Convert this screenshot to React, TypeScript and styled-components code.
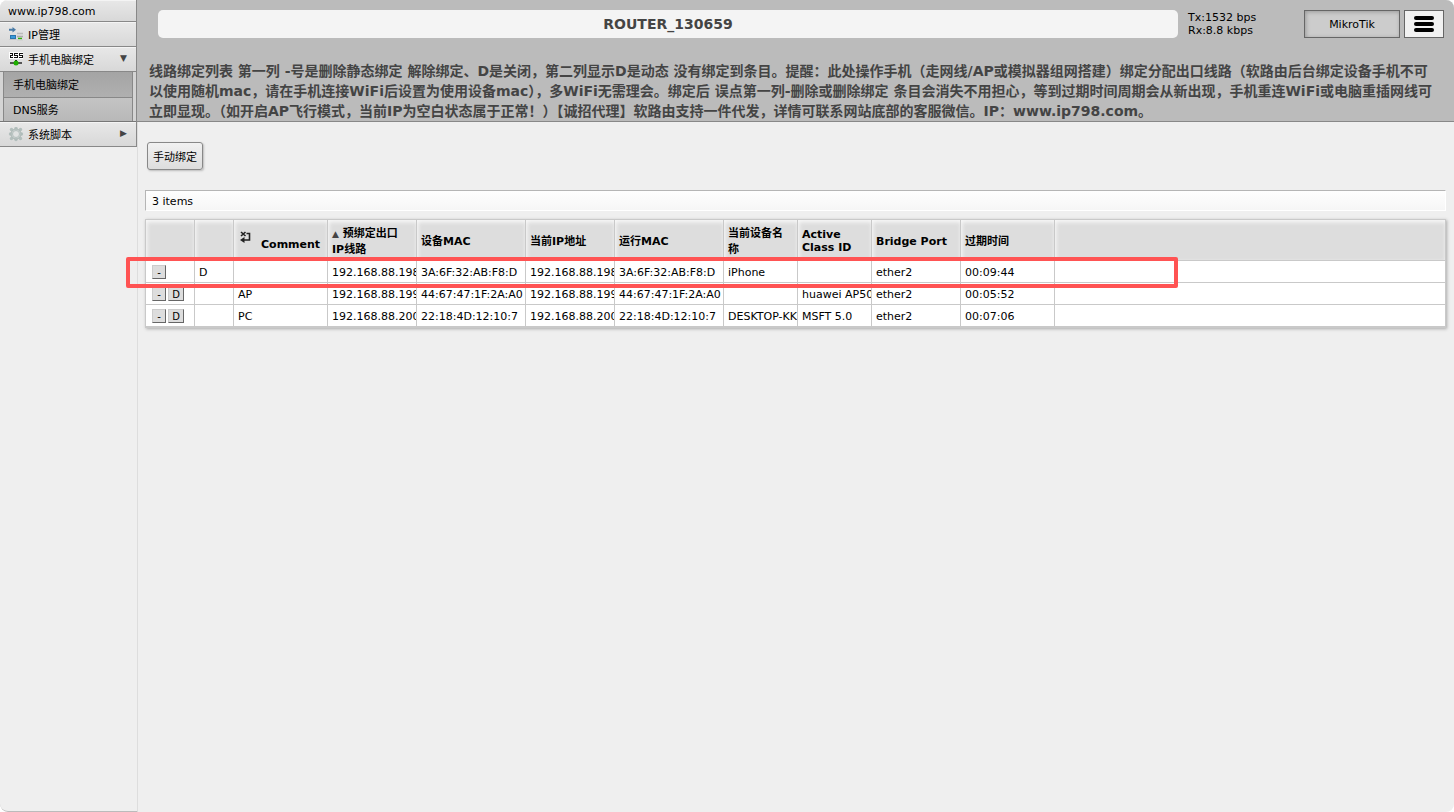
import React from "react";
import styled, { createGlobalStyle } from "styled-components";

const font = `"DejaVu Sans", "Noto Sans CJK SC", sans-serif`;

const GlobalStyle = createGlobalStyle`
  *, *::before, *::after { box-sizing: border-box; }
  html { background: #fff; }
  body { margin: 0; font: 11px/13px ${font}; color: #000; }
  button { font: inherit; color: inherit; cursor: pointer; }
  a { color: inherit; text-decoration: none; }
`;

const Shell = styled.div`
  display: flex;
  min-height: 100vh;
  background: #efefef;
  border-radius: 8px;
  overflow: hidden;
`;

const Sidebar = styled.nav`
  flex: none;
  width: 138px;
  background: #efefef;
  border-right: 1px solid #ddd;
  border-bottom: 1px solid #bbb;
  border-radius: 0 0 0 8px;
`;

const Menu = styled.ul`
  list-style: none;
  margin: 0;
  padding: 0;
`;

const MenuLink = styled.a<{ $brand?: boolean }>`
  display: flex;
  align-items: center;
  gap: 4px;
  height: ${(p) => (p.$brand ? 22 : 25)}px;
  padding: 2px 8px 0;
  border-right: 1px solid #888;
  border-bottom: 1px solid #888;
  background: linear-gradient(#e8e8e8, #d8d8d8);
  box-shadow: inset 0 1px 0 #f4f4f4;

  svg { flex: none; }
`;

const Arrow = styled.span`
  margin: 0 1px 4px auto;
  color: #444;
  font-size: 9px;
  line-height: 9px;
`;

const SubMenu = styled(Menu)`
  padding: 0 3px;
  background: #d4d4d4;
  border-right: 1px solid #888;
  border-bottom: 1px solid #777;
`;

const SubLink = styled.a<{ $active?: boolean }>`
  display: flex;
  align-items: center;
  height: ${(p) => (p.$active ? 26 : 23)}px;
  padding: 2px 0 0 9px;
  border: solid #888;
  border-width: 0 1px ${(p) => (p.$active ? 1 : 0)}px;
  background: ${(p) =>
    p.$active ? "linear-gradient(#a4a4a4, #b0b0b0)" : "linear-gradient(#c4c4c4, #b8b8b8)"};
`;

const Main = styled.div`
  flex: 1;
  min-width: 0;
`;

const Header = styled.header`
  background: #bbb;
  border-bottom: 1px solid #888;
  border-left: 1px solid #888;
  margin-left: -2px;
`;

const TopBar = styled.div`
  display: flex;
  align-items: center;
  padding: 10px 10px 10px 21px;
`;

const Title = styled.h1`
  flex: 1;
  margin: 0;
  border-radius: 5px;
  background: #f4f4f4;
  color: #444;
  text-align: center;
  font-size: 14px;
  line-height: 28px;
`;

const Traffic = styled.div`
  width: 126px;
  padding-left: 10px;
`;

const BrandButton = styled.button`
  width: 96px;
  height: 28px;
  margin-right: 4px;
  padding: 0;
  border: 1px solid #666;
  background: #ccc;
  box-shadow: inset 1px 1px 4px #999;
`;

const MenuButton = styled.button`
  display: grid;
  place-items: center;
  width: 40px;
  height: 28px;
  padding: 0;
  border: 1px solid #666;
  background: #f1f1f1;
`;

const Notice = styled.p`
  margin: 0;
  padding: 13px 12px 0;
  color: #444;
  font-size: 14px;
  font-weight: bold;
  line-height: 20px;
  white-space: nowrap;
`;

const Content = styled.main`
  padding: 20px 8px 0 7px;
`;

const ActionButton = styled.button`
  display: block;
  height: 28px;
  margin: 0 0 20px 2px;
  padding: 2px 5px 0;
  border: 1px solid #888;
  border-radius: 3px;
  background: linear-gradient(#f1f1f1, #ddd);
  box-shadow: 1px 1px 2px #bbb;
`;

const Count = styled.div`
  height: 21px;
  margin-bottom: 8px;
  padding: 0 6px;
  border: 1px solid #fff;
  border-top-color: #b5b5b5;
  border-left-color: #b5b5b5;
  background: linear-gradient(#fefefe, #f6f6f6);
  line-height: 21px;
`;

const TableWrap = styled.div`
  position: relative;
`;

const Table = styled.table`
  width: 100%;
  table-layout: fixed;
  border-collapse: separate;
  border-spacing: 0;
  border: 1px solid #c9c9c9;
  border-width: 1px 1px 2px 0;
  background: #fff;
  box-shadow: 1px 1px 3px #aaa;
`;

const Th = styled.th<{ $tall?: boolean }>`
  height: 41px;
  padding: ${(p) => (p.$tall ? 3 : 2)}px 4px 0;
  border-left: 1px solid #c9c9c9;
  border-bottom: 1px solid #c9c9c9;
  background: #ddd;
  box-shadow: inset 1px 2px 4px #fafafa;
  line-height: ${(p) => (p.$tall ? 16 : 13)}px;
  text-align: left;
  vertical-align: middle;
`;

const CommentHead = styled.span`
  display: flex;
  align-items: center;
  gap: 10px;
  padding: 0 2px;

  span { padding-top: 6px; }
  svg { flex: none; margin-bottom: 8px; }
`;

const SortMark = styled.span`
  color: #444;
  font-size: 9px;
  font-weight: normal;
`;

const Td = styled.td<{ $actions?: boolean }>`
  height: 22px;
  padding: ${(p) => (p.$actions ? 0 : 2)}px 0 0 4px;
  border-left: 1px solid #c9c9c9;
  border-bottom: 1px solid #c9c9c9;
  overflow: hidden;
  white-space: nowrap;

  tr:last-child > & {
    height: 21px;
    border-bottom-width: 0;
  }
`;

const Actions = styled.div`
  display: flex;
  gap: 2px;
  padding-left: 2px;
`;

const MiniButton = styled.button<{ $wide?: boolean }>`
  width: ${(p) => (p.$wide ? 16 : 14)}px;
  height: 14px;
  padding: 0;
  border: 1px solid #ccc;
  border-right-color: #666;
  border-bottom-color: #666;
  background: #ddd;
  font-size: 10px;
  line-height: 13px;
`;

const Highlight = styled.div`
  position: absolute;
  top: 38px;
  left: -19px;
  width: 1052px;
  height: 31px;
  border: 4px solid #ff5353;
  border-radius: 2px;
  pointer-events: none;
`;

const AddressIcon = () => (
  <svg width="16" height="16" viewBox="0 0 16 16" aria-hidden="true">
    <path d="M1 1.800h3.500V0L8 2.800 4.500 5.500V3.800H1z" fill="#4a7ba6" />
    <rect x="2.500" y="8.500" width="5" height="3" fill="#3a9ad9" stroke="#2a75ad" />
    <path d="M9 6.500h6" stroke="#bbb" strokeWidth="1.500" />
    <path d="M9 9.500h6" stroke="#aaa" strokeWidth="1.500" />
    <path d="M1.500 12.500h7" stroke="#c4c4c4" />
    <path d="M10 11.500h4" stroke="#2fae0a" strokeWidth="1.500" />
    <path d="M9 13h6" stroke="#ccc" />
  </svg>
);

const NetworkIcon = () => (
  <svg width="16" height="16" viewBox="0 0 16 16" aria-hidden="true">
    <rect x="1" y="0" width="14" height="7" fill="#fff" />
    <path
      d="M2 1h3v3H3v1h2v1H2V3h2V2H2zM6 1h4v1H7v1h3v3H6V5h3V4H6zM11 1h4v1h-3v1h3v3h-4V5h3V4h-3z"
      fill="#111"
    />
    <path d="M7 8h2v1H7z" fill="#222" />
    <path d="M2 10h12v2H2z" fill="#555" />
    <circle cx="8" cy="11" r="2.500" fill="#1faf00" />
  </svg>
);

const lobes: [number, number][] = [[3.5, 2.5], [8, 1.5], [12.5, 2.5], [13.5, 7], [12.5, 11.5], [8, 12.5], [3.5, 11.5], [2.5, 7]];

const GearIcon = () => (
  <svg width="16" height="16" viewBox="0 0 16 16" aria-hidden="true">
    {lobes.map(([x, y]) => (
      <circle key={`${x}-${y}`} cx={x} cy={y} r="1.700" fill="#b3bfbd" />
    ))}
    <circle cx="8" cy="7" r="5" fill="#c9d1d0" stroke="#aab6b4" />
    <circle cx="8" cy="7" r="3.500" fill="#e0e2e2" stroke="#b5c0be" />
  </svg>
);

const BarsIcon = () => (
  <svg width="20" height="16" viewBox="0 0 20 16" aria-hidden="true">
    <rect y="0" width="20" height="4" rx="2" />
    <rect y="6" width="20" height="4" rx="2" />
    <rect y="12" width="20" height="4" rx="2" />
  </svg>
);

const CommentIcon = () => (
  <svg width="11" height="12" viewBox="0 0 11 12" aria-hidden="true">
    <path d="M1 1l4.500 4M5.500 1L1 5M6.500 2.500h3v6.500H4" fill="none" stroke="#222" strokeWidth="1.600" />
    <path d="M0 9l4.500-3v6z" fill="#222" />
  </svg>
);

const columns: { head: React.ReactNode; width?: number; tall?: boolean }[] = [
  { head: "", width: 49 },
  { head: "", width: 39 },
  {
    head: (
      <CommentHead>
        <CommentIcon />
        <span>Comment</span>
      </CommentHead>
    ),
    width: 94,
  },
  {
    head: (
      <>
        <SortMark>▲</SortMark> 预绑定出口<br />IP线路
      </>
    ),
    width: 89,
    tall: true,
  },
  { head: "设备MAC", width: 109 },
  { head: "当前IP地址", width: 89 },
  { head: "运行MAC", width: 109 },
  { head: "当前设备名称", width: 74, tall: true },
  { head: "Active Class ID", width: 74 },
  { head: "Bridge Port", width: 89 },
  { head: "过期时间", width: 94 },
  { head: "" },
];

const rows = [
  { dynamic: true, cells: ["D", "", "192.168.88.198", "3A:6F:32:AB:F8:D", "192.168.88.198", "3A:6F:32:AB:F8:D", "iPhone", "", "ether2", "00:09:44", ""] },
  { dynamic: false, cells: ["", "AP", "192.168.88.199", "44:67:47:1F:2A:A0", "192.168.88.199", "44:67:47:1F:2A:A0", "", "huawei AP50", "ether2", "00:05:52", ""] },
  { dynamic: false, cells: ["", "PC", "192.168.88.200", "22:18:4D:12:10:7", "192.168.88.200", "22:18:4D:12:10:7", "DESKTOP-KK", "MSFT 5.0", "ether2", "00:07:06", ""] },
];

export default function App() {
  return (
    <>
      <GlobalStyle />
      <Shell>
        <Sidebar>
          <Menu>
            <li><MenuLink $brand href="#home">www.ip798.com</MenuLink></li>
            <li><MenuLink href="#ip"><AddressIcon />IP管理</MenuLink></li>
            <li>
              <MenuLink href="#devices"><NetworkIcon />手机电脑绑定<Arrow>▼</Arrow></MenuLink>
              <SubMenu>
                <li><SubLink $active href="#binding">手机电脑绑定</SubLink></li>
                <li><SubLink href="#dns">DNS服务</SubLink></li>
              </SubMenu>
            </li>
            <li><MenuLink href="#scripts"><GearIcon />系统脚本<Arrow>▶</Arrow></MenuLink></li>
          </Menu>
        </Sidebar>
        <Main>
          <Header>
            <TopBar>
              <Title>ROUTER_130659</Title>
              <Traffic>Tx:1532 bps<br />Rx:8.8 kbps</Traffic>
              <BrandButton type="button">MikroTik</BrandButton>
              <MenuButton type="button" aria-label="Menu"><BarsIcon /></MenuButton>
            </TopBar>
            <Notice>
              线路绑定列表 第一列 -号是删除静态绑定 解除绑定、D是关闭，第二列显示D是动态 没有绑定到条目。提醒：此处操作手机（走网线/AP或模拟器组网搭建）绑定分配出口线路（软路由后台绑定设备手机不可<br />
              以使用随机mac，请在手机连接WiFi后设置为使用设备mac），多WiFi无需理会。绑定后 误点第一列-删除或删除绑定 条目会消失不用担心，等到过期时间周期会从新出现，手机重连WiFi或电脑重插网线可<br />
              立即显现。（如开启AP飞行模式，当前IP为空白状态属于正常！）【诚招代理】软路由支持一件代发，详情可联系网站底部的客服微信。IP：www.ip798.com。
            </Notice>
          </Header>
          <Content>
            <ActionButton type="button">手动绑定</ActionButton>
            <Count>3 items</Count>
            <TableWrap>
              <Table>
                <colgroup>
                  {columns.map((c, i) => <col key={i} width={c.width} />)}
                </colgroup>
                <thead>
                  <tr>{columns.map((c, i) => <Th key={i} $tall={c.tall}>{c.head}</Th>)}</tr>
                </thead>
                <tbody>
                  {rows.map((r, i) => (
                    <tr key={i}>
                      <Td $actions>
                        <Actions>
                          <MiniButton type="button">-</MiniButton>
                          {!r.dynamic && <MiniButton $wide type="button">D</MiniButton>}
                        </Actions>
                      </Td>
                      {r.cells.map((text, j) => <Td key={j}>{text}</Td>)}
                    </tr>
                  ))}
                </tbody>
              </Table>
              <Highlight />
            </TableWrap>
          </Content>
        </Main>
      </Shell>
    </>
  );
}
